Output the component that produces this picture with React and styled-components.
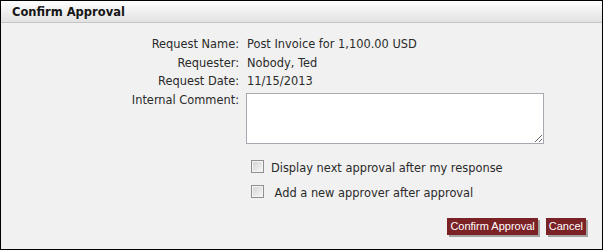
import React, { useState } from 'react';
import styled, { createGlobalStyle } from 'styled-components';

const GlobalStyle = createGlobalStyle`
  html, body {
    margin: 0;
    padding: 0;
    background: #ffffff;
  }
  * {
    box-sizing: border-box;
  }
`;

const Dialog = styled.div`
  width: 603px;
  height: 250px;
  border: 1px solid #000;
  background: #f1f1f1;
  display: flex;
  flex-direction: column;
  font-family: 'DejaVu Sans', Verdana, sans-serif;
  font-size: 11.4px;
  color: #2a2a2a;
`;

const Header = styled.div`
  height: 22px;
  padding: 0 11px;
  display: flex;
  align-items: center;
  background: linear-gradient(#fefefe, #e2e2e2);
  border-bottom: 1px solid #c4c4c4;
  font-weight: bold;
  font-size: 11.5px;
  color: #161616;
`;

const Body = styled.div`
  flex: 1;
  padding-top: 12px;
`;

const Fields = styled.div`
  display: grid;
  grid-template-columns: 238px 1fr;
  column-gap: 8px;
  line-height: 18.5px;
`;

const Label = styled.div`
  text-align: right;
  padding-top: ${(p) => (p.$top ? '0.5px' : '0')};
`;

const Value = styled.div`
  padding-top: ${(p) => (p.$top ? '0.5px' : '0')};
`;

const Comment = styled.textarea`
  display: block;
  width: 298px;
  height: 51px;
  margin: 2px 0 0 -1px;
  border: 1px solid #a8a8b0;
  background: #fff;
  font-family: inherit;
  font-size: 11px;
  padding: 2px;
`;

const Checks = styled.div`
  margin: 15px 0 0 250px;
  display: flex;
  flex-direction: column;
  gap: 7px;
`;

const CheckRow = styled.label`
  display: flex;
  align-items: flex-start;
  gap: 7px;
  line-height: 18px;
  white-space: pre;
  cursor: pointer;
`;

const Box = styled.span`
  width: 13px;
  height: 13px;
  margin-top: 1px;
  flex: none;
  border: 1px solid #8e8f8f;
  background: linear-gradient(135deg, #d2d2d2, #f8f8f8);
  box-shadow: inset 0 0 0 1px #f4f4f4;
  display: flex;
  align-items: center;
  justify-content: center;
  font-size: 10px;
  line-height: 1;
  color: #333;
`;

const Footer = styled.div`
  display: flex;
  justify-content: flex-end;
  gap: 8px;
  padding: 0 16px 14px 0;
`;

const Button = styled.button`
  height: 17px;
  padding: 0 3px;
  border: none;
  background: #7b2226;
  color: #fff;
  font-family: 'Liberation Sans', Arial, sans-serif;
  font-size: 11px;
  line-height: 17px;
  box-shadow: 2px 2px 0 #a3a3a3;
  cursor: pointer;
`;

const Check = ({ label }) => {
  const [on, setOn] = useState(false);
  return (
    <CheckRow onClick={() => setOn(!on)}>
      <Box>{on ? '✓' : ''}</Box>
      <span>{label}</span>
    </CheckRow>
  );
};

export default function App() {
  return (
    <>
      <GlobalStyle />
      <Dialog>
        <Header>Confirm Approval</Header>
        <Body>
          <Fields>
            <Label>Request Name:</Label>
            <Value>Post Invoice for 1,100.00 USD</Value>
            <Label>Requester:</Label>
            <Value>Nobody, Ted</Value>
            <Label>Request Date:</Label>
            <Value>11/15/2013</Value>
            <Label $top>Internal Comment:</Label>
            <Value $top>
              <Comment />
            </Value>
          </Fields>
          <Checks>
            <Check label="Display next approval after my response" />
            <Check label=" Add a new approver after approval" />
          </Checks>
        </Body>
        <Footer>
          <Button>Confirm Approval</Button>
          <Button>Cancel</Button>
        </Footer>
      </Dialog>
    </>
  );
}
